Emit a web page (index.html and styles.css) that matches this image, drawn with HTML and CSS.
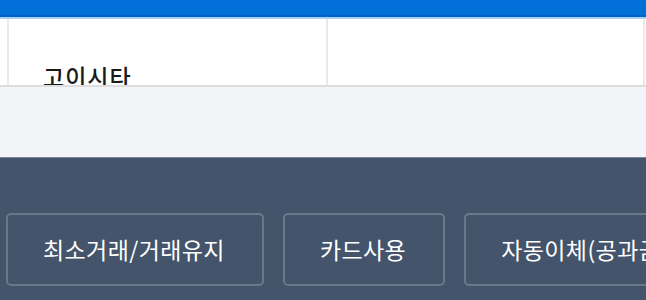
FILE: index.html
```html
<!DOCTYPE html>
<html>
<head>
	<meta charset="utf-8">
	<title>거래조건</title>
	<link rel="stylesheet" href="styles.css">
</head>
<body>
	<div class="cabecera"></div>

	<div class="tabla">
		<div class="celda">
			<span class="nombre">고이시타</span>
		</div>
		<div class="celda ultima"></div>
	</div>

	<div class="gris"></div>

	<div class="pie">
		<a class="boton">최소거래/거래유지</a>
		<a class="boton">카드사용</a>
		<a class="boton">자동이체(공과금)</a>
	</div>
</body>
</html>
```

FILE: styles.css
```css
*{box-sizing: border-box;}
body{
	margin: 0;
	font-family: "Noto Sans CJK KR", "Noto Sans", sans-serif;
	overflow: hidden;
}
.cabecera{
	height: 19px;
	background-color: #006fd8;
	border-bottom: 2px solid #a9d2f3;
	box-shadow: inset 0 -2px 0 #0062c4;
}
.tabla{
	display: grid;
	grid-template-columns: 319px 319px;
	height: 68px;
	padding-left: 7px;
	background-color: white;
	border-bottom: 2px solid #dcdee0;
	overflow: hidden;
}
.celda{
	border-left: 2px solid #e7e9eb;
	padding: 42px 0 0 34px;
	overflow: hidden;
}
.ultima{ border-right: 2px solid #e7e9eb; }
.nombre{
	font-size: 23px;
	font-weight: 500;
	letter-spacing: 1px;
	color: #1a1a1a;
	line-height: 30px;
	white-space: nowrap;
}
.gris{
	height: 70px;
	background-color: #f3f4f8;
}
.pie{
	display: flex;
	gap: 19px;
	height: 143px;
	padding: 55px 0 0 6px;
	background-color: #44546a;
	border-top: 1px solid #7d8794;
	white-space: nowrap;
	overflow: hidden;
}
.boton{
	flex-shrink: 0;
	height: 73px;
	padding: 0 37px 0 35px;
	border: 2px solid #6a7889;
	border-radius: 5px;
	color: white;
	font-size: 23px;
	letter-spacing: 0.4px;
	line-height: 68px;
	text-align: center;
	cursor: pointer;
}
```
